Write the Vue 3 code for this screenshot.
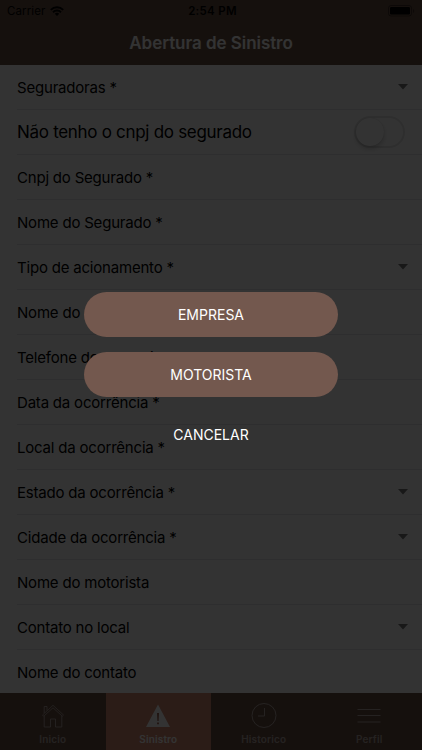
<script setup>
import { ref } from "vue";

const hasNoCnpj = ref(false);
const isModalOpen = ref(true);
const activeTab = ref("sinistro");

const fields = [
  { label: "Seguradoras *", type: "select" },
  { label: "Não tenho o cnpj do segurado", type: "toggle" },
  { label: "Cnpj do Segurado *" },
  { label: "Nome do Segurado *" },
  { label: "Tipo de acionamento *", type: "select" },
  { label: "Nome do comunicante *" },
  { label: "Telefone do comunicante *" },
  { label: "Data da ocorrência *" },
  { label: "Local da ocorrência *" },
  { label: "Estado da ocorrência *", type: "select" },
  { label: "Cidade da ocorrência *", type: "select" },
  { label: "Nome do motorista" },
  { label: "Contato no local", type: "select" },
  { label: "Nome do contato" },
];

const tabs = [
  { id: "inicio", label: "Inicio" },
  { id: "sinistro", label: "Sinistro" },
  { id: "historico", label: "Historico" },
  { id: "perfil", label: "Perfil" },
];

const closeModal = () => {
  isModalOpen.value = false;
};
</script>
<template>
  <main class="app">
    <header class="header">
      <div class="status-bar">
        <div class="carrier">
          <span>Carrier</span>
          <svg class="wifi" viewBox="0 0 14 10">
            <path d="M.8 3.8a8.8 8.8 0 0 1 12.4 0M3 6.2a5.7 5.7 0 0 1 8 0" fill="none" stroke="currentColor" stroke-width="1.9" />
            <path d="M4.8 7.8a3.2 3.2 0 0 1 4.4 0L7 10z" fill="currentColor" />
          </svg>
        </div>
        <span class="time">2:54 PM</span>
        <div class="battery-wrap">
          <svg class="battery" viewBox="0 0 27 12">
            <rect x="0.5" y="0.5" width="23" height="10.5" rx="2.5" fill="none" stroke="currentColor" opacity="0.4" />
            <rect x="2" y="2" width="20" height="7.5" rx="1.2" fill="currentColor" />
            <path d="M25 4v4q1.3-.6 1.3-2T25 4z" fill="currentColor" opacity="0.4" />
          </svg>
        </div>
      </div>
      <h1 class="title">Abertura de Sinistro</h1>
    </header>

    <section class="form">
      <div v-for="field in fields" :key="field.label" class="field" :class="field.type">
        <span class="label">{{ field.label }}</span>
        <svg v-if="field.type === 'select'" class="caret" viewBox="0 0 10 6">
          <path d="M0 0h10L5 5.5z" fill="currentColor" />
        </svg>
        <button v-if="field.type === 'toggle'" class="switch" :class="{ on: hasNoCnpj }" @click="hasNoCnpj = !hasNoCnpj">
          <span class="knob"></span>
        </button>
      </div>
    </section>

    <nav class="tabs">
      <button v-for="tab in tabs" :key="tab.id" class="tab" :class="{ active: activeTab === tab.id }" @click="activeTab = tab.id">
        <svg class="icon" viewBox="0 0 26 26" fill="none" stroke="currentColor">
          <template v-if="tab.id === 'inicio'">
            <path d="M2.5 13L13 3.3 23.5 13l-1.2 1.2L13 5.8l-9.3 8.4z" stroke-width="0.8" />
            <path d="M4.2 14v11h6.3v-8h5v8h6.3V14M4.2 11V4.5H7v4" stroke-width="0.9" />
          </template>
          <template v-else-if="tab.id === 'sinistro'">
            <path d="M13 2.5L25 25H1z" fill="currentColor" stroke="none" />
            <path class="mark" d="M12 11h2l-.4 8h-1.2zM12.1 20.5h1.8v1.8h-1.8z" stroke="none" />
          </template>
          <template v-else-if="tab.id === 'historico'">
            <circle cx="13" cy="13.5" r="12" />
            <path d="M13.5 6v8H7" />
          </template>
          <path v-else d="M1.5 7.5h23M1.5 13.5h23M1.5 20h23" />
        </svg>
        <span>{{ tab.label }}</span>
      </button>
    </nav>

    <div v-if="isModalOpen" class="overlay">
      <button class="option" @click="closeModal">EMPRESA</button>
      <button class="option" @click="closeModal">MOTORISTA</button>
      <button class="cancel" @click="closeModal">CANCELAR</button>
    </div>
  </main>
</template>

<style>
body {
  margin: 0;
  background: #333;
}
</style>

<style scoped>
.app {
  position: relative;
  display: flex;
  flex-direction: column;
  height: 100vh;
  overflow: hidden;
  background: #fff;
  font-family: Inter, "Liberation Sans", sans-serif;
  color: #000;
}

button {
  border: none;
  padding: 0;
  background: none;
  font-family: inherit;
  cursor: pointer;
}

.header {
  flex: none;
  height: 65px;
  background: #6b5043;
}

.status-bar {
  display: grid;
  grid-template-columns: 1fr auto 1fr;
  align-items: center;
  height: 22px;
  padding: 0 7px;
  font-size: 11.5px;
}

.carrier {
  display: flex;
  align-items: center;
  gap: 5px;
  letter-spacing: 0.1px;
}

.wifi {
  width: 14px;
  height: 10px;
}

.time {
  padding-left: 3px;
  font-weight: 600;
  letter-spacing: 0.3px;
}

.battery-wrap {
  display: flex;
  justify-content: flex-end;
}

.battery {
  width: 27px;
  height: 12px;
}

.title {
  margin: 0;
  line-height: 42px;
  font-size: 17px;
  font-weight: 600;
  letter-spacing: -0.05px;
  text-align: center;
  color: #fff;
}

.form {
  flex: 1;
  min-height: 0;
  overflow: hidden;
}

.field {
  box-sizing: border-box;
  display: flex;
  align-items: center;
  justify-content: space-between;
  height: 45px;
  margin-left: 17px;
  padding-right: 14px;
  border-bottom: 1px solid #e6e6ea;
  font-size: 15px;
  letter-spacing: -0.2px;
}

.toggle {
  padding-right: 17px;
  font-size: 17px;
  letter-spacing: -0.3px;
}

.caret {
  width: 10px;
  height: 6px;
  color: #777;
}

.switch {
  box-sizing: border-box;
  width: 51px;
  height: 32px;
  border: 2px solid #e5e5e5;
  border-radius: 16px;
}

.knob {
  display: block;
  width: 28px;
  height: 28px;
  border-radius: 50%;
  background: #fff;
  box-shadow: 0 3px 5px rgba(0, 0, 0, 0.2), 0 0 1px rgba(0, 0, 0, 0.2);
}

.on .knob {
  margin-left: 19px;
}

.tabs {
  flex: none;
  display: grid;
  grid-template-columns: repeat(4, 1fr);
  height: 57px;
  background: #6b5043;
}

.tab {
  display: flex;
  flex-direction: column;
  align-items: center;
  justify-content: flex-start;
  padding-top: 9px;
  color: #b9aca6;
  font-size: 10px;
  font-weight: 600;
  line-height: 14px;
  letter-spacing: 0.15px;
}

.icon {
  width: 26px;
  height: 26px;
  margin-bottom: 4px;
}

.tab.active {
  background: #d78c73;
  color: #fff;
}

.mark {
  fill: #a06250;
}

.overlay {
  position: absolute;
  inset: 0;
  display: flex;
  flex-direction: column;
  align-items: center;
  justify-content: center;
  gap: 15px;
  padding-bottom: 1px;
  background: rgba(0, 0, 0, 0.8);
}

.option,
.cancel {
  width: 254px;
  height: 45px;
  color: #fff;
  font-size: 14px;
}

.option {
  border-radius: 23px;
  background: #73584e;
}
</style>
